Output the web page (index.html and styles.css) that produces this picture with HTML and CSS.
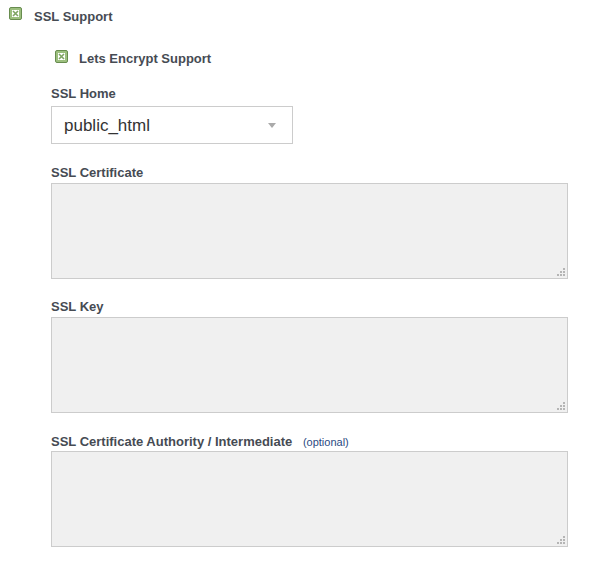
FILE: index.html
```html
<!DOCTYPE html>
<html>
<head>
<meta charset="utf-8">
<link rel="stylesheet" href="styles.css">
</head>
<body>
<div class="page">
  <div class="check-row top">
    <svg class="cb" width="13" height="13" viewBox="0 0 13 13"><rect x="0.5" y="0.5" width="12" height="12" rx="1.5" fill="#9cbf7e" stroke="#688c4f"/><rect x="3" y="3" width="7" height="7" fill="#ffffff"/><path d="M4 4 L9 9 M9 4 L4 9" stroke="#7ea362" stroke-width="1.6"/></svg>
    <span class="cb-label">SSL Support</span>
  </div>
  <div class="section">
    <div class="check-row sub">
      <svg class="cb" width="13" height="13" viewBox="0 0 13 13"><rect x="0.5" y="0.5" width="12" height="12" rx="1.5" fill="#9cbf7e" stroke="#688c4f"/><rect x="3" y="3" width="7" height="7" fill="#ffffff"/><path d="M4 4 L9 9 M9 4 L4 9" stroke="#7ea362" stroke-width="1.6"/></svg>
      <span class="cb-label">Lets Encrypt Support</span>
    </div>
    <div class="field home">
      <div class="label">SSL Home</div>
      <div class="select">
        <span class="select-text">public_html</span>
        <span class="caret"></span>
      </div>
    </div>
    <div class="field cert">
      <div class="label">SSL Certificate</div>
      <div class="area"><svg class="grip" width="9" height="9" viewBox="0 0 9 9"><g fill="#b5b5b5"><rect x="6" y="0" width="2" height="2"/><rect x="3" y="3" width="2" height="2"/><rect x="6" y="3" width="2" height="2"/><rect x="0" y="6" width="2" height="2"/><rect x="3" y="6" width="2" height="2"/><rect x="6" y="6" width="2" height="2"/></g></svg></div>
    </div>
    <div class="field key">
      <div class="label">SSL Key</div>
      <div class="area"><svg class="grip" width="9" height="9" viewBox="0 0 9 9"><g fill="#b5b5b5"><rect x="6" y="0" width="2" height="2"/><rect x="3" y="3" width="2" height="2"/><rect x="6" y="3" width="2" height="2"/><rect x="0" y="6" width="2" height="2"/><rect x="3" y="6" width="2" height="2"/><rect x="6" y="6" width="2" height="2"/></g></svg></div>
    </div>
    <div class="field ca">
      <div class="label">SSL Certificate Authority / Intermediate <span class="opt">(optional)</span></div>
      <div class="area"><svg class="grip" width="9" height="9" viewBox="0 0 9 9"><g fill="#b5b5b5"><rect x="6" y="0" width="2" height="2"/><rect x="3" y="3" width="2" height="2"/><rect x="6" y="3" width="2" height="2"/><rect x="0" y="6" width="2" height="2"/><rect x="3" y="6" width="2" height="2"/><rect x="6" y="6" width="2" height="2"/></g></svg></div>
    </div>
  </div>
</div>
</body>
</html>
```
FILE: styles.css
```css
html, body {
  margin: 0;
  padding: 0;
  background: #ffffff;
}
.page {
  font-family: "Liberation Sans", Arial, sans-serif;
  color: #464b53;
  padding-top: 7px;
}
.check-row {
  display: flex;
  align-items: center;
  height: 13px;
}
.check-row.top {
  padding-left: 9px;
}
.check-row.top .cb-label {
  margin-left: 12px;
  margin-top: 6px;
}
.cb {
  display: block;
  flex: none;
}
.cb-label {
  font-size: 13px;
  font-weight: bold;
  line-height: 16px;
  white-space: nowrap;
}
.section {
  padding-left: 51px;
}
.check-row.sub {
  margin-top: 30px;
  padding-left: 4px;
}
.check-row.sub .cb-label {
  margin-left: 11px;
  margin-top: 4px;
}
.label {
  font-size: 13px;
  font-weight: bold;
  line-height: 16px;
  height: 16px;
  white-space: nowrap;
}
.opt {
  font-size: 11px;
  font-weight: normal;
  color: #2a4a82;
  margin-left: 7px;
}
.select {
  box-sizing: border-box;
  width: 242px;
  height: 38px;
  border: 1px solid #cccccc;
  background: #ffffff;
  display: flex;
  align-items: center;
  justify-content: space-between;
  padding: 2px 16px 0 12px;
}
.select-text {
  font-family: "Liberation Sans", Arial, sans-serif;
  font-size: 17px;
  color: #333333;
}
.caret {
  width: 0;
  height: 0;
  margin-top: -2px;
  border-left: 4px solid transparent;
  border-right: 4px solid transparent;
  border-top: 5px solid #aaaaaa;
}
.field.home {
  margin-top: 23px;
}
.field.home .label {
  margin-bottom: 4px;
}
.field.cert {
  margin-top: 21px;
}
.field.cert .label {
  margin-bottom: 2px;
}
.field.key {
  margin-top: 20px;
}
.field.key .label {
  margin-bottom: 2px;
}
.field.ca {
  margin-top: 21px;
}
.field.ca .label {
  margin-bottom: 1px;
}
.area {
  box-sizing: border-box;
  width: 517px;
  height: 96px;
  border: 1px solid #cccccc;
  background: #f0f0f0;
  position: relative;
}
.grip {
  position: absolute;
  right: 1px;
  bottom: 1px;
}
```
